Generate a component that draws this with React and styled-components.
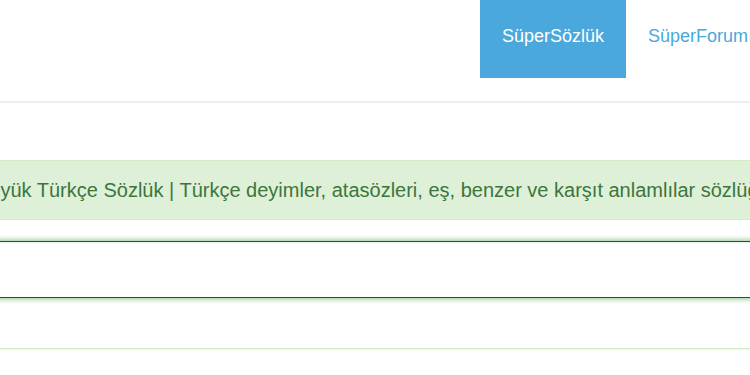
import React from "react";
import styled, { createGlobalStyle } from "styled-components";

const GlobalStyle = createGlobalStyle`
  html, body {
    margin: 0;
    padding: 0;
    background: #ffffff;
    font-family: "Liberation Sans", Arial, sans-serif;
  }
`;

const Page = styled.div`
  width: 750px;
  height: 375px;
  overflow: hidden;
  display: flex;
  flex-direction: column;
  align-items: center;
`;

const Header = styled.header`
  width: 100%;
  height: 101px;
  border-bottom: 2px solid #eeeeee;
  display: flex;
  justify-content: center;
  flex-shrink: 0;
`;

const HeaderInner = styled.div`
  width: 830px;
  flex-shrink: 0;
  display: flex;
  justify-content: flex-end;
  align-items: flex-start;
  padding-right: 20px;
  box-sizing: border-box;
`;

const NavTab = styled.a`
  display: block;
  padding: 26px 22px 32px;
  font-size: 18px;
  line-height: 20px;
  text-decoration: none;
  color: ${(p) => (p.active ? "#ffffff" : "#4aa8dc")};
  background-color: ${(p) => (p.active ? "#4aa8dc" : "transparent")};
`;

const Content = styled.main`
  width: 830px;
  flex-shrink: 0;
  padding-top: 57px;
  display: flex;
  flex-direction: column;
`;

const Alert = styled.div`
  padding: 14px 15px;
  background-color: #dff0d8;
  border: 1px solid #d6e9c6;
  border-radius: 4px;
  color: #3c763d;
  font-size: 20px;
  line-height: 30px;
  white-space: nowrap;
`;

const SearchInput = styled.input`
  margin-top: 21px;
  height: 57px;
  box-sizing: border-box;
  border: 1px solid #2b542c;
  border-radius: 4px;
  box-shadow: inset 0 1px 1px rgba(0, 0, 0, 0.075), 0 0 6px #67b168;
  outline: none;
  padding: 0 16px;
  font-family: inherit;
  font-size: 18px;
`;

const ResultPanel = styled.div`
  margin-top: 50px;
  height: 120px;
  border: 1px solid #d6e9c6;
  border-radius: 4px;
  box-shadow: inset 0 1px 2px rgba(0, 0, 0, 0.06);
`;

export default function App() {
  return (
    <Page>
      <GlobalStyle />
      <Header>
        <HeaderInner>
          <NavTab active href="#">SüperSözlük</NavTab>
          <NavTab href="#">SüperForum</NavTab>
        </HeaderInner>
      </Header>
      <Content>
        <Alert>
          Büyük Türkçe Sözlük | Türkçe deyimler, atasözleri, eş, benzer ve karşıt anlamlılar sözlüğü
        </Alert>
        <SearchInput type="text" />
        <ResultPanel />
      </Content>
    </Page>
  );
}
